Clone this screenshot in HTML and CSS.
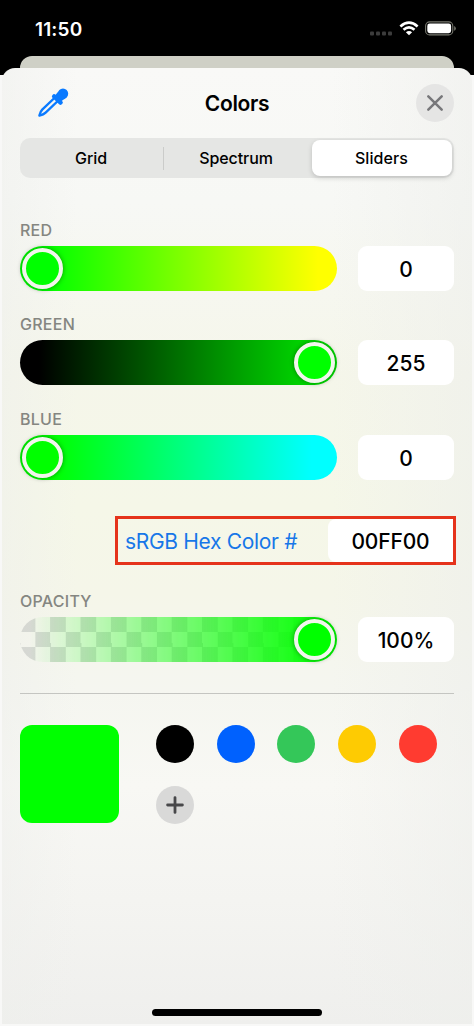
FILE: index.html
```html
<!DOCTYPE html>
<html lang="en">
<head>
<meta charset="utf-8">
<title>Colors</title>
<link rel="stylesheet" href="styles.css">
</head>
<body>
<div class="phone">
  <header class="status">
    <span class="time">11:50</span>
    <div class="indicators">
      <svg class="cell" width="22" height="5" viewBox="0 0 22 5"><g fill="#3c3c3c"><rect x="0" y=".5" width="4" height="4" rx="1"/><rect x="6" y=".5" width="4" height="4" rx="1"/><rect x="12" y=".5" width="4" height="4" rx="1"/><rect x="18" y=".5" width="4" height="4" rx="1"/></g></svg>
      <svg class="wifi" width="20" height="15" viewBox="0 0 20 15"><g fill="none" stroke="#fff" stroke-width="2.7"><path d="M1.4 5.4Q10-2.2 18.6 5.4"/><path d="M4.5 8.8Q10 4 15.5 8.8"/></g><path d="M6.9 11.2Q10 8.6 13.1 11.2L10 14.3Z" fill="#fff"/></svg>
      <svg class="battery" width="31" height="15" viewBox="0 0 31 15"><rect x=".6" y=".9" width="27.2" height="13" rx="4" fill="none" stroke="#77786f" stroke-width="1.1"/><rect x="2.3" y="2.6" width="23.8" height="9.6" rx="2.4" fill="#fff"/><path d="M29.2 5v4.8q1.6-.7 1.6-2.4T29.2 5Z" fill="#77786f"/></svg>
    </div>
  </header>
  <div class="behind"></div>
  <div class="backdrop">
  <main class="sheet">
    <div class="titlebar">
      <svg class="dropper" width="32" height="32" viewBox="0 0 32 32"><path d="M18.4 11 6.2 22.6Q4.4 24.4 3.4 28.6 7.6 27.6 9.6 25.6L21.8 14" fill="none" stroke="#0a7aff" stroke-width="2.4" stroke-linejoin="round"/><g fill="#0a7aff"><circle cx="27" cy="6.7" r="5.2"/><path d="M22.3 4.6 17.8 10 23.4 15.6 29.2 11.4Z"/></g><path d="M18.1 9.4 24.6 15.6" stroke="#0a7aff" stroke-width="4.4" stroke-linecap="round"/></svg>
      <h1>Colors</h1>
      <button class="close" aria-label="Close"><svg width="18" height="18" viewBox="0 0 18 18"><path d="M2.3 2.3 15.7 15.7M15.7 2.3 2.3 15.7" stroke="#77777a" stroke-width="2.5" stroke-linecap="round"/></svg></button>
    </div>
    <nav class="segments">
      <span class="segment">Grid</span>
      <i class="rule"></i>
      <span class="segment spectrum">Spectrum</span>
      <span class="segment selected">Sliders</span>
    </nav>
    <section class="channels">
      <div class="channel"><h2>RED</h2><div class="row"><div class="track red"><i class="knob"></i></div><div class="value">0</div></div></div>
      <div class="channel"><h2>GREEN</h2><div class="row"><div class="track green end"><i class="knob"></i></div><div class="value">255</div></div></div>
      <div class="channel"><h2>BLUE</h2><div class="row"><div class="track blue"><i class="knob"></i></div><div class="value">0</div></div></div>
    </section>
    <div class="hex"><span class="hex-label">sRGB Hex Color #</span><span class="hex-value">00FF00</span></div>
    <div class="channel opacity"><h2>OPACITY</h2><div class="row"><div class="track alpha end"><i class="knob"></i></div><div class="value">100%</div></div></div>
    <hr>
    <section class="palette">
      <div class="current"></div>
      <div class="swatches">
        <i class="dot black"></i><i class="dot azure"></i><i class="dot emerald"></i><i class="dot yellow"></i><i class="dot scarlet"></i>
        <button class="dot add" aria-label="Add"><svg width="18" height="18" viewBox="0 0 18 18"><path d="M9 1.6V16.4M1.6 9H16.4" stroke="#48484a" stroke-width="2.8" stroke-linecap="round"/></svg></button>
      </div>
    </section>
    <div class="home"></div>
  </main>
  </div>
</div>
</body>
</html>
```
FILE: styles.css
```css
* { box-sizing: border-box; }
body { margin: 0; font-family: Inter, "Liberation Sans", sans-serif; color: #000; }
h1, h2 { margin: 0; }
button { border: 0; padding: 0; }
svg { display: block; overflow: visible; }
.phone { width: 474px; height: 1026px; background: #000; display: flex; flex-direction: column; overflow: hidden; }
.status { height: 56px; padding: 0 18px 0 35px; display: flex; justify-content: space-between; align-items: flex-start; }
.time { color: #fff; font-size: 19px; line-height: 24px; font-weight: 600; letter-spacing: .15px; margin-top: 18px; }
.indicators { display: flex; align-items: center; margin-top: 21px; }
.cell { margin: 10px 7px 0 0; }
.wifi { margin-right: 6px; }
.behind { height: 12px; margin: 0 20px; border-radius: 12px 12px 0 0; background: #cfd0c6; }
.backdrop { flex: 1; background: linear-gradient(#000 7px, #f8f8f7 7px); }
.sheet {
  height: 956px; margin: 0 2px; padding: 0 18px; border-radius: 13px 13px 0 0;
  display: flex; flex-direction: column;
  background:
    linear-gradient(90deg, #eeefec80, #eeefec00 16%, #eeefec00 70%, #eeefec99),
    linear-gradient(#f9f9f7 0, #f7f8f5 14%, #f5f6ea 32%, #f5f7e8 46%, #f5f6e9 55%, #f5f6f0 65%, #f8f8f4 75%, #f4f4f1 87%, #efefed 100%);
}
.titlebar { height: 70px; display: grid; grid-template-columns: 1fr auto 1fr; align-items: center; }
.dropper { margin-left: 16px; margin-top: 0; }
h1 { font-size: 21px; font-weight: 600; line-height: 28px; letter-spacing: -.35px; padding-top: 1px; }
.close { width: 38px; height: 38px; border-radius: 50%; background: #e5e5e4; justify-self: end; display: grid; place-items: center; }
.segments { height: 40px; border-radius: 10px; background: #e5e6e4; padding: 2px; display: grid; grid-template-columns: 141px 1px 148px 140px; align-items: center; font-size: 16px; font-weight: 500; }
.segment { text-align: center; line-height: 36px; letter-spacing: -.1px; padding-right: 3px; }
.spectrum { padding-right: 4px; }
.rule { height: 23px; background: #cbccca; }
.segment.selected { padding-right: 1px; letter-spacing: .1px; border-radius: 8px; background: #fff; box-shadow: 0 2px 5px #0000002b; height: 36px; }
.channels { display: grid; grid-template-rows: 94px 95px 94px; padding-top: 42px; }
h2 { height: 26px; font-size: 16px; line-height: 20px; font-weight: 550; letter-spacing: .25px; color: #858681; }
.row { display: grid; grid-template-columns: 317px 96px; column-gap: 21px; }
.track { height: 45px; border-radius: 23px; padding: 2px; display: flex; }
.end { justify-content: flex-end; }
.red { background: linear-gradient(90deg, #0f0 8%, #ff0 94%); }
.green { background: linear-gradient(90deg, #000 6%, #00e000 94%); }
.blue { background: linear-gradient(90deg, #0f0 10%, #0ff 92%); }
.alpha { background: linear-gradient(90deg, #00ff0000 3%, #0f0 97%), conic-gradient(#b9bcb980 25%, #f5f6e900 0 50%, #b9bcb980 0 75%, #f5f6e900 0) -15px 0 / 30.4px 30px; }
.knob { width: 41px; height: 41px; border: 4px solid #f2f6ed; border-radius: 50%; background: #0f0; box-shadow: 0 0 5px #00000066; }
.value { height: 45px; border-radius: 9px; background: #fff; text-align: center; font-size: 21px; line-height: 47px; font-weight: 480; }
.hex { width: 341px; height: 49px; flex: none; margin: 13px -2px 0 auto; border: 3px solid #e5331b; display: grid; grid-template-columns: 210px 125px; font-size: 21px; line-height: 46px; }
.hex-label { padding-left: 7px; color: #1777e8; white-space: nowrap; letter-spacing: -.32px; }
.hex-value { height: 43px; background: #fff; border-radius: 8px 0 0 8px; text-align: center; font-weight: 480; letter-spacing: -.15px; }
.opacity { margin-top: 26px; }
hr { width: 434px; height: 1px; margin: 31px 0; border: 0; background: #c4c5c1; flex: none; }
.palette { display: flex; gap: 37px; }
.current { width: 99px; height: 98px; border-radius: 12px; background: #0f0; }
.swatches { display: grid; grid-template-columns: repeat(5, 38px); column-gap: 22.7px; row-gap: 23px; }
.dot { width: 38px; height: 38px; border-radius: 50%; }
.black { background: #000; }
.azure { background: #0061fe; }
.emerald { background: #34c759; }
.yellow { background: #fecb02; }
.scarlet { background: #ff3b30; }
.add { background: #d9d9d8; display: grid; place-items: center; }
.home { width: 170px; height: 7px; border-radius: 4px; background: #000; margin: auto auto 8px; }
```
